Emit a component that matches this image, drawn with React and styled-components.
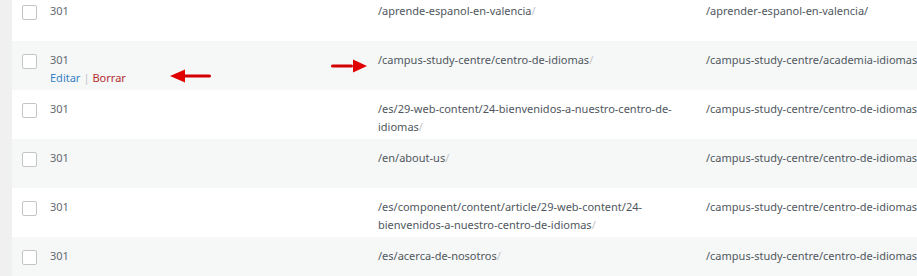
import React from "react";
import styled, { createGlobalStyle } from "styled-components";

const GlobalStyle = createGlobalStyle`
  html, body {
    margin: 0;
    padding: 0;
    background: #f0f0f1;
    overflow: hidden;
  }
  body {
    font-family: "Noto Sans", "Open Sans", sans-serif;
  }
`;

const redirects = [
  { code: "301", source: "/aprende-espanol-en-valencia", target: "/aprender-espanol-en-valencia/" },
  { code: "301", source: "/campus-study-centre/centro-de-idiomas", target: "/campus-study-centre/academia-idiomas/", actions: true },
  { code: "301", source: "/es/29-web-content/24-bienvenidos-a-nuestro-centro-de-idiomas", target: "/campus-study-centre/centro-de-idiomas/" },
  { code: "301", source: "/en/about-us", target: "/campus-study-centre/centro-de-idiomas/" },
  { code: "301", source: "/es/component/content/article/29-web-content/24-bienvenidos-a-nuestro-centro-de-idiomas", target: "/campus-study-centre/centro-de-idiomas/" },
  { code: "301", source: "/es/acerca-de-nosotros", target: "/campus-study-centre/centro-de-idiomas/" },
];

// red annotation arrows drawn over the table
const Arrow = ({ direction, width }) => (
  <svg width={width} height="14" viewBox={`0 0 ${width} 14`}>
    {direction === "left" ? (
      <>
        <path d="M0 7 L15 0.5 L15 13.5 Z" fill="#e00000" />
        <rect x="14" y="5.5" width={width - 15} height="3" rx="1.5" fill="#d40000" />
      </>
    ) : (
      <>
        <path d={`M${width} 7 L${width - 14} 0.5 L${width - 14} 13.5 Z`} fill="#e00000" />
        <rect x="1" y="5.5" width={width - 15} height="3" rx="1.5" fill="#d40000" />
      </>
    )}
  </svg>
);

const App = () => (
  <>
    <GlobalStyle />
    <Page>
      <Table>
        {redirects.map((r, i) => (
          <Row key={i} $striped={i % 2 === 1}>
            <CheckCell>
              <Checkbox />
            </CheckCell>
            <CodeCell>
              <span>{r.code}</span>
              {r.actions && (
                <Actions>
                  <Edit>Editar</Edit>
                  <Sep>|</Sep>
                  <Delete>Borrar</Delete>
                </Actions>
              )}
            </CodeCell>
            <SourceCell>
              {r.source}
              <Slash>/</Slash>
            </SourceCell>
            <TargetCell>{r.target}</TargetCell>
            {r.actions && (
              <>
                <LeftArrow>
                  <Arrow direction="left" width={42} />
                </LeftArrow>
                <RightArrow>
                  <Arrow direction="right" width={37} />
                </RightArrow>
              </>
            )}
          </Row>
        ))}
      </Table>
    </Page>
  </>
);

const Page = styled.div`
  padding-left: 12px;
  margin-top: -8px;
  width: 1100px;
`;

const Table = styled.div`
  display: flex;
  flex-direction: column;
  background: #fff;
`;

const Row = styled.div`
  position: relative;
  display: grid;
  grid-template-columns: 38px 328px 328px 340px;
  height: 49px;
  box-sizing: border-box;
  padding-top: 10px;
  background: ${(p) => (p.$striped ? "#f6f7f7" : "#fff")};
  font-size: 11px;
  line-height: 18px;
  color: #50575e;
`;

const CheckCell = styled.div`
  padding-left: 10px;
  padding-top: 3px;
`;

const Checkbox = styled.div`
  width: 13px;
  height: 13px;
  border: 1px solid #c3c4c7;
  border-radius: 2px;
  background: #fff;
`;

const CodeCell = styled.div`
  display: flex;
  flex-direction: column;
  color: #646970;
`;

const Actions = styled.div`
  display: flex;
  gap: 3px;
`;

const Edit = styled.span`
  color: #3582c4;
`;

const Sep = styled.span`
  color: #c3c4c7;
`;

const Delete = styled.span`
  color: #b32d2e;
`;

const SourceCell = styled.div`
  padding-right: 20px;
`;

const Slash = styled.span`
  color: #c3c4c7;
`;

const TargetCell = styled.div`
  white-space: nowrap;
`;

const LeftArrow = styled.div`
  position: absolute;
  left: 158px;
  top: 28px;
  line-height: 0;
`;

const RightArrow = styled.div`
  position: absolute;
  left: 318px;
  top: 18px;
  line-height: 0;
`;

export default App;
